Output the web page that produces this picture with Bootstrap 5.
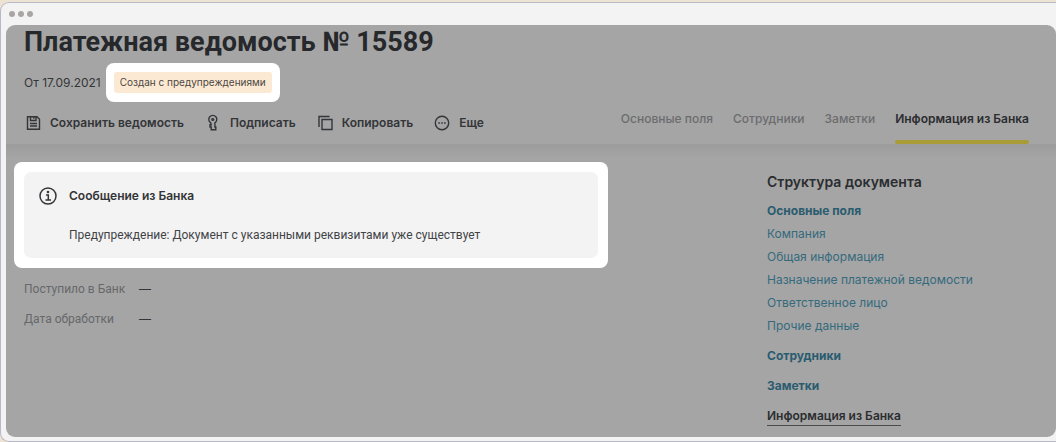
<!DOCTYPE html>
<html lang="ru">
<head>
<meta charset="utf-8">
<meta name="viewport" content="width=device-width, initial-scale=1">
<title>Платежная ведомость № 15589</title>
<link href="https://cdn.jsdelivr.net/npm/bootstrap@5.3.0/dist/css/bootstrap.min.css" rel="stylesheet">
<style>
  body { font-family: Inter, "Liberation Sans", sans-serif; font-size: 12px; line-height: 18px; color: #333538; background: #ede3d3; padding-top: 2px; }
  .window { background: #f3f3f3; border: 1px solid #b9b8c6; border-right: 0; border-radius: 9px 0 0 9px; padding: 0 0 4px 5px; min-height: calc(100vh - 2px); }
  .titlebar { height: 22px; padding-left: 3px; gap: 3px; }
  .dot { width: 6px; height: 6px; border-radius: 50%; background: #aaa5a5; }
  .sheet { background: #a5a5a5; border-radius: 9px; }
  .sheet-head { padding: 0 27px 0 18px; }
  .sheet-head h1 { font-family: Roboto, sans-serif; font-size: 27px; line-height: 34px; font-weight: 700; color: #26282b; }
  .spot { background: #fff; border-radius: 8px; }
  .spot-status { padding: 9px 8px; }
  .status-row { gap: 5px; }
  .status { background: #fce9d3; border-radius: 3px; font-size: 10px; line-height: 21px; padding: 0 6px; color: #4b4743; }
  .toolbar { gap: 20px; padding: 12px 0; }
  .tool { font-size: 12px; line-height: 18px; font-weight: 600; color: #333538; border: 0; padding: 0; gap: 8px; }
  .tool svg { width: 18px; height: 18px; fill: none; stroke: #333538; stroke-width: 1.4; }
  .tabs { gap: 20px; }
  .tabs a { color: #6b6c6e; font-weight: 500; padding-bottom: 12px; border-bottom: 4px solid transparent; text-decoration: none; position: relative; }
  .tabs a.current { color: #2b2d30; font-weight: 600; }
  .tabs a.current::after { content: ""; position: absolute; left: 0; right: 0; bottom: -4px; height: 4px; border-radius: 2px; background: #a99b35; }
  .sheet-body { display: grid; grid-template-columns: minmax(0, 594fr) minmax(0, 289fr); column-gap: 159px; padding: 18px 0 8px 8px; background: linear-gradient(#9c9c9c, #a5a5a5 14px); border-radius: 0 0 9px 9px; }
  .spot-message { padding: 10px; }
  .message { background: #f3f3f3; border-radius: 7px; padding: 15px 16px 14px 15px; }
  .message svg { width: 18px; height: 18px; flex: none; }
  .message h2 { font-size: 12px; line-height: 18px; font-weight: 600; }
  .message p { font-family: Roboto, sans-serif; padding-left: 30px; margin-top: 21px; color: #414346; }
  .facts { display: grid; grid-template-columns: 115px auto; row-gap: 12px; margin: 12px 0 0 10px; }
  .facts dt { font-family: Roboto, sans-serif; font-weight: 400; color: #67686a; }
  .outline h2 { font-size: 14px; line-height: 20px; font-weight: 600; color: #2b2d30; margin: 10px 0; }
  .outline ul { gap: 5px; }
  .outline a { color: #356a7d; text-decoration: none; }
  .outline .top { color: #2a5c70; font-weight: 700; }
  .outline .spaced { margin-top: 7px; }
  .outline .here { color: #2b2d30; font-weight: 600; display: inline-block; border-bottom: 1px solid #4b4c4e; }
</style>
</head>
<body>
<div class="window d-flex flex-column">
  <div class="titlebar d-flex align-items-center" aria-hidden="true">
    <span class="dot"></span><span class="dot"></span><span class="dot"></span>
  </div>
  <div class="sheet flex-grow-1">
    <header class="sheet-head">
      <h1 class="m-0">Платежная ведомость № 15589</h1>
      <div class="status-row d-flex align-items-center pt-1">
        <span>От 17.09.2021</span>
        <span class="spot spot-status d-flex"><span class="status">Создан с предупреждениями</span></span>
      </div>
      <div class="d-flex justify-content-between">
        <div class="toolbar d-flex align-items-center">
          <button type="button" class="btn tool d-flex align-items-center">
            <svg viewBox="0 0 18 18"><path d="M3.500 2.700h9.500l2.500 2.500v10h-12z"/><path d="M6.500 2.700v3.800h5.500V2.700M9.800 2.700v2M6 9.500h7M6 12h7"/></svg>
            Сохранить ведомость
          </button>
          <button type="button" class="btn tool d-flex align-items-center">
            <svg viewBox="0 0 18 18"><path d="M6.700 8.800a4 4 0 1 1 4.200 0V13h.9v2.800H7.200V13H6v-2.200h1.200z"/><circle cx="8.800" cy="5.500" r=".9"/></svg>
            Подписать
          </button>
          <button type="button" class="btn tool d-flex align-items-center">
            <svg viewBox="0 0 18 18"><path d="M6 5.500h10v10H6z"/><path d="M3 13V2.500H13.500"/></svg>
            Копировать
          </button>
          <button type="button" class="btn tool d-flex align-items-center">
            <svg viewBox="0 0 18 18"><circle cx="9" cy="9" r="6.700"/><path d="M5.300 9h1.600M8.200 9h1.600M11.100 9h1.600"/></svg>
            Еще
          </button>
        </div>
        <nav class="tabs d-flex align-items-end">
          <a href="#main">Основные поля</a>
          <a href="#staff">Сотрудники</a>
          <a href="#notes">Заметки</a>
          <a href="#bank" class="current" aria-current="page">Информация из Банка</a>
        </nav>
      </div>
    </header>
    <div class="sheet-body">
      <main>
        <div class="spot spot-message">
          <section class="message">
            <div class="d-flex align-items-center">
              <svg viewBox="0 0 18 18" fill="none" stroke="#333538" stroke-width="1.500"><circle cx="9" cy="9" r="8"/><path d="M7 8h2.300v5M6.500 13h5.500"/><circle cx="9" cy="5" r=".6" fill="#333538"/></svg>
              <h2 class="m-0 ps-1 ms-2">Сообщение из Банка</h2>
            </div>
            <p class="mb-0">Предупреждение: Документ с указанными реквизитами уже существует</p>
          </section>
        </div>
        <dl class="facts mb-0">
          <dt>Поступило в Банк</dt><dd class="m-0">—</dd>
          <dt>Дата обработки</dt><dd class="m-0">—</dd>
        </dl>
      </main>
      <aside class="outline">
        <h2>Структура документа</h2>
        <ul class="list-unstyled d-flex flex-column m-0">
          <li><a class="top" href="#main">Основные поля</a></li>
          <li><a href="#company">Компания</a></li>
          <li><a href="#general">Общая информация</a></li>
          <li><a href="#purpose">Назначение платежной ведомости</a></li>
          <li><a href="#person">Ответственное лицо</a></li>
          <li><a href="#other">Прочие данные</a></li>
          <li class="spaced"><a class="top" href="#staff">Сотрудники</a></li>
          <li class="spaced"><a class="top" href="#notes">Заметки</a></li>
          <li class="spaced"><a class="here" href="#bank">Информация из Банка</a></li>
        </ul>
      </aside>
    </div>
  </div>
</div>
<script src="https://cdn.jsdelivr.net/npm/bootstrap@5.3.0/dist/js/bootstrap.bundle.min.js"></script>
</body>
</html>
